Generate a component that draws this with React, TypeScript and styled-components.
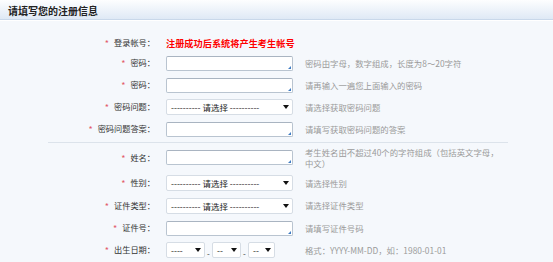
import { FC } from "react";
import styled, { createGlobalStyle } from "styled-components";

const GlobalStyle = createGlobalStyle`
  html, body {
    margin: 0;
    padding: 0;
    background: #f5f8fc;
  }
  body {
    font-family: "Noto Sans CJK SC", "Noto Sans", sans-serif;
    color: #333;
  }
`;

interface RowData {
  label: string;
  kind: "text" | "input" | "select" | "date";
  hint?: string;
  value?: string;
  height: number;
}

const topRows: RowData[] = [
  { label: "登录帐号：", kind: "text", value: "注册成功后系统将产生考生帐号", height: 19 },
  { label: "密码：", kind: "input", hint: "密码由字母，数字组成，长度为8～20字符", height: 22 },
  { label: "密码：", kind: "input", hint: "请再输入一遍您上面输入的密码", height: 22 },
  { label: "密码问题：", kind: "select", hint: "请选择获取密码问题", height: 22 },
  { label: "密码问题答案：", kind: "input", hint: "请填写获取密码问题的答案", height: 22 },
];

const bottomRows: RowData[] = [
  { label: "姓名：", kind: "input", hint: "考生姓名由不超过40个的字符组成（包括英文字母，中文）", height: 29 },
  { label: "性别：", kind: "select", hint: "请选择性别", height: 22.5 },
  { label: "证件类型：", kind: "select", hint: "请选择证件类型", height: 22.5 },
  { label: "证件号：", kind: "input", hint: "请填写证件号码", height: 22.5 },
  { label: "出生日期：", kind: "date", hint: "格式：YYYY-MM-DD，如：1980-01-01", height: 21 },
];

const Arrow: FC = () => (
  <svg width="6" height="4" viewBox="0 0 6 4">
    <path d="M0 0 L6 0 L3 4 Z" fill="#111" />
  </svg>
);

const Field: FC<{ row: RowData }> = ({ row }) => {
  if (row.kind === "text") return <Notice>{row.value}</Notice>;
  if (row.kind === "input") return <TextBox />;
  if (row.kind === "select")
    return (
      <SelectBox width={127}>
        <SelectText>---------- 请选择 ----------</SelectText>
        <Arrow />
      </SelectBox>
    );
  return (
    <DateGroup>
      <SelectBox width={39}>
        <SelectText>----</SelectText>
        <Arrow />
      </SelectBox>
      <Dash>-</Dash>
      <SelectBox width={29}>
        <SelectText>--</SelectText>
        <Arrow />
      </SelectBox>
      <Dash>-</Dash>
      <SelectBox width={27}>
        <SelectText>--</SelectText>
        <Arrow />
      </SelectBox>
    </DateGroup>
  );
};

const FormRow: FC<{ row: RowData }> = ({ row }) => (
  <Row height={row.height}>
    <Label>
      <Star>*</Star>
      {row.label}
    </Label>
    <Field row={row} />
    {row.hint && <Hint>{row.hint}</Hint>}
  </Row>
);

export default function App() {
  return (
    <>
      <GlobalStyle />
      <Header>
        <Title>请填写您的注册信息</Title>
      </Header>
      <Body>
        {topRows.map((r, i) => (
          <FormRow key={i} row={r} />
        ))}
        <Divider />
        {bottomRows.map((r, i) => (
          <FormRow key={i} row={r} />
        ))}
        <Divider dotted />
      </Body>
    </>
  );
}

const Header = styled.div`
  height: 19px;
  background: linear-gradient(#fdfeff, #dfe9f5);
  border-bottom: 1px solid #c9d8ea;
  display: flex;
  align-items: center;
  padding-left: 8px;
`;

const Title = styled.h1`
  margin: 0;
  font-size: 10px;
  font-weight: bold;
  color: #222;
  line-height: 1;
  padding-top: 3px;
`;

const Body = styled.div`
  padding-top: 12px;
  border-top: 1px solid #fff;
`;

const Row = styled.div<{ height: number }>`
  display: grid;
  grid-template-columns: 155px 128px 196px;
  column-gap: 11px;
  align-items: center;
  height: ${(p) => p.height}px;
`;

const Label = styled.div`
  text-align: right;
  font-size: 8.2px;
  color: #333;
  white-space: nowrap;
`;

const Star = styled.span`
  color: #e25b6a;
  margin-right: 5px;
  font-size: 9px;
  vertical-align: -1px;
`;

const Notice = styled.div`
  grid-column: 2 / 4;
  color: #f00;
  font-weight: bold;
  font-size: 9.2px;
  white-space: nowrap;
`;

const TextBox = styled.div`
  position: relative;
  width: 125px;
  height: 13px;
  background: #fff;
  border: 1px solid #b9c4d0;
  border-top-color: #a9b4c1;
  border-radius: 2px;

  &::after {
    content: "";
    position: absolute;
    right: 1px;
    bottom: 1px;
    border-left: 3px solid transparent;
    border-bottom: 3px solid #3f7cc4;
  }
`;

const SelectBox = styled.div<{ width: number }>`
  width: ${(p) => p.width - 9}px;
  height: 14px;
  background: #fff;
  border: 1px solid #d6dde5;
  border-radius: 2px;
  padding: 0 3px 0 4px;
  display: flex;
  align-items: center;
  justify-content: space-between;
  flex-shrink: 0;
`;

const SelectText = styled.span`
  font-size: 8.5px;
  color: #222;
  white-space: nowrap;
`;

const DateGroup = styled.div`
  display: flex;
  align-items: center;
  gap: 1px;
`;

const Dash = styled.span`
  font-size: 8px;
  color: #333;
  padding-top: 6px;
  width: 5px;
  text-align: center;
`;

const Hint = styled.div`
  font-size: 8.4px;
  color: #9a9a9a;
  line-height: 11px;
`;

const Divider = styled.div<{ dotted?: boolean }>`
  margin: 2px 0 0 48px;
  width: 460px;
  border-top: 1px ${(p) => (p.dotted ? "dotted" : "solid")} #dce3eb;
`;
